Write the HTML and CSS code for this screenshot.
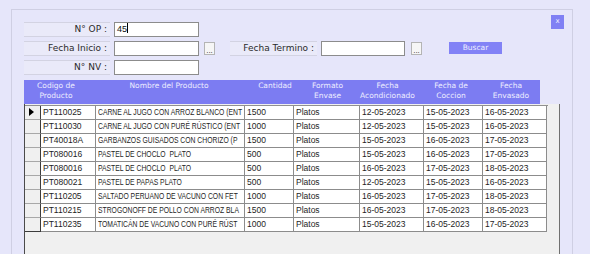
FILE: index.html
```html
<!DOCTYPE html>
<html lang="es">
<head>
    <meta charset="UTF-8">
    <title>Buscar Producto</title>
    <link rel="stylesheet" href="styles.css">
</head>
<body>
    <div class="panel">
        <div class="top">
            <div class="form">
                <div class="row">
                    <div class="label">N° OP :</div>
                    <div class="field">45<span class="caret"></span></div>
                </div>
                <div class="row">
                    <div class="label">Fecha Inicio :</div>
                    <div class="field"></div>
                    <div class="dots">...</div>
                    <div class="label label-end">Fecha Termino :</div>
                    <div class="field field-end"></div>
                    <div class="dots dots-end">...</div>
                    <div class="btn-buscar">Buscar</div>
                </div>
                <div class="row">
                    <div class="label">N° NV :</div>
                    <div class="field"></div>
                </div>
            </div>
            <div class="btn-close">x</div>
        </div>

        <div class="grid">
            <div class="grid-header">
                <div>Codigo de<br>Producto</div>
                <div>Nombre del Producto</div>
                <div>Cantidad</div>
                <div>Formato<br>Envase</div>
                <div>Fecha<br>Acondicionado</div>
                <div>Fecha de<br>Coccion</div>
                <div>Fecha<br>Envasado</div>
            </div>
            <div class="grid-body">
                <div class="rows">
                    <div class="grid-row">
                        <div class="rh"><span class="arrow"></span></div>
                        <div>PT110025</div><div><span class="nm">CARNE AL JUGO CON ARROZ BLANCO (ENT</span></div><div>1500</div><div>Platos</div><div>12-05-2023</div><div>15-05-2023</div><div>16-05-2023</div>
                    </div>
                    <div class="grid-row">
                        <div class="rh"></div>
                        <div>PT110030</div><div><span class="nm">CARNE AL JUGO CON PURÉ RÚSTICO (ENT</span></div><div>1000</div><div>Platos</div><div>12-05-2023</div><div>15-05-2023</div><div>16-05-2023</div>
                    </div>
                    <div class="grid-row">
                        <div class="rh"></div>
                        <div>PT40018A</div><div><span class="nm">GARBANZOS GUISADOS CON CHORIZO (P</span></div><div>1500</div><div>Platos</div><div>15-05-2023</div><div>16-05-2023</div><div>17-05-2023</div>
                    </div>
                    <div class="grid-row">
                        <div class="rh"></div>
                        <div>PT080016</div><div><span class="nm">PASTEL DE CHOCLO  PLATO</span></div><div>500</div><div>Platos</div><div>15-05-2023</div><div>16-05-2023</div><div>17-05-2023</div>
                    </div>
                    <div class="grid-row">
                        <div class="rh"></div>
                        <div>PT080016</div><div><span class="nm">PASTEL DE CHOCLO  PLATO</span></div><div>500</div><div>Platos</div><div>16-05-2023</div><div>17-05-2023</div><div>18-05-2023</div>
                    </div>
                    <div class="grid-row">
                        <div class="rh"></div>
                        <div>PT080021</div><div><span class="nm">PASTEL DE PAPAS PLATO</span></div><div>500</div><div>Platos</div><div>12-05-2023</div><div>15-05-2023</div><div>16-05-2023</div>
                    </div>
                    <div class="grid-row">
                        <div class="rh"></div>
                        <div>PT110205</div><div><span class="nm">SALTADO PERUANO DE VACUNO CON FET</span></div><div>1000</div><div>Platos</div><div>16-05-2023</div><div>17-05-2023</div><div>18-05-2023</div>
                    </div>
                    <div class="grid-row">
                        <div class="rh"></div>
                        <div>PT110215</div><div><span class="nm">STROGONOFF DE POLLO CON ARROZ BLA</span></div><div>1500</div><div>Platos</div><div>16-05-2023</div><div>17-05-2023</div><div>18-05-2023</div>
                    </div>
                    <div class="grid-row">
                        <div class="rh rh-last"></div>
                        <div>PT110235</div><div><span class="nm">TOMATICÁN DE VACUNO CON PURÉ RÚST</span></div><div>1000</div><div>Platos</div><div>15-05-2023</div><div>16-05-2023</div><div>17-05-2023</div>
                    </div>
                </div>
            </div>
        </div>
    </div>
</body>
</html>
```

FILE: styles.css
```css
* {
    box-sizing: border-box;
}
body {
    margin: 0;
    height: 254px;
    overflow: hidden;
    background-color: #e6e6fa;
    font-family: "DejaVu Sans", sans-serif;
    color: #333;
}
.panel {
    margin: 9px 0 0 11px;
    width: 562px;
    height: 245px;
    border: 1px solid #cfcfe3;
    border-bottom: none;
    padding: 5px 5px 0 12px;
    overflow: hidden;
}
.top {
    display: flex;
    align-items: flex-start;
}
.form {
    flex: 1;
    margin-top: 6px;
    display: flex;
    flex-direction: column;
    gap: 3px;
}
.row {
    display: flex;
    align-items: center;
    height: 16px;
}
.label {
    width: 86px;
    height: 15px;
    border-top: 1px solid #d3d3e2;
    border-bottom: 1px solid #d3d3e2;
    background-color: #eaeaf9;
    text-align: right;
    padding-right: 3px;
    font-size: 9px;
    line-height: 13px;
    color: #2a2a2a;
}
.label-end {
    width: 87px;
    margin-left: 15px;
}
.field {
    width: 85px;
    height: 15px;
    margin-left: 4px;
    border: 1px solid #8c8c8c;
    background-color: #fff;
    font-family: "Liberation Sans", sans-serif;
    font-size: 9px;
    line-height: 13px;
    padding-left: 2px;
    color: #111;
}
.field-end {
    width: 84px;
}
.caret {
    display: inline-block;
    width: 1px;
    height: 10px;
    background-color: #000;
    vertical-align: -1px;
}
.dots {
    width: 11px;
    height: 13px;
    margin-left: 5px;
    border: 1px solid #b4b4b4;
    background-color: #f6f6f6;
    font-size: 7px;
    line-height: 16px;
    text-align: center;
    color: #333;
    overflow: hidden;
}
.dots-end {
    margin-left: 6px;
}
.btn-buscar {
    width: 53px;
    height: 12px;
    margin-left: 27px;
    background-color: #8282f6;
    color: #eeeeff;
    font-size: 7.5px;
    line-height: 12px;
    text-align: center;
}
.btn-close {
    width: 13px;
    height: 14px;
    margin-right: 3px;
    background-color: #8080f4;
    color: #eeeeff;
    font-size: 7px;
    line-height: 13px;
    text-align: center;
}
.grid {
    margin-top: 5px;
}
.grid-header {
    display: grid;
    grid-template-columns: 64px 162px 50px 55px 65px 62px 58px;
    width: 516px;
    height: 24px;
    background-color: #7c7cf2;
    color: #eeeeff;
    font-size: 7.5px;
    line-height: 10px;
    text-align: center;
    padding-top: 1px;
}
.grid-body {
    width: 536px;
    height: 160px;
    background-color: #f0f0f0;
    border-left: 1px solid #4a4a4a;
    border-right: 1px solid #707070;
    padding-top: 1px;
}
.rows {
    width: 523px;
    border-top: 1px solid #909090;
}
.grid-row {
    display: grid;
    grid-template-columns: 16px 55px 149px 49px 66px 64px 59px 64px;
    height: 14px;
}
.grid-row div {
    background-color: #fff;
    border-right: 1px solid #8c8c8c;
    border-bottom: 1px solid #8c8c8c;
    padding-left: 2px;
    font-family: "Liberation Sans", sans-serif;
    font-size: 8.5px;
    line-height: 13px;
    color: #1e1e1e;
    white-space: pre;
    overflow: hidden;
}
.nm {
    display: inline-block;
    transform: scaleX(0.8);
    transform-origin: left center;
}
.grid-row .rh {
    background-color: #f0f0f0;
    border-right: 1px solid #3c3c3c;
    border-bottom: 1px solid #a8a8a8;
    padding-left: 4px;
}
.grid-row .rh-last {
    border-bottom: 1px solid #3c3c3c;
}
.arrow {
    display: inline-block;
    width: 0;
    height: 0;
    border-left: 5px solid #000;
    border-top: 4px solid transparent;
    border-bottom: 4px solid transparent;
    vertical-align: -1px;
}
```
